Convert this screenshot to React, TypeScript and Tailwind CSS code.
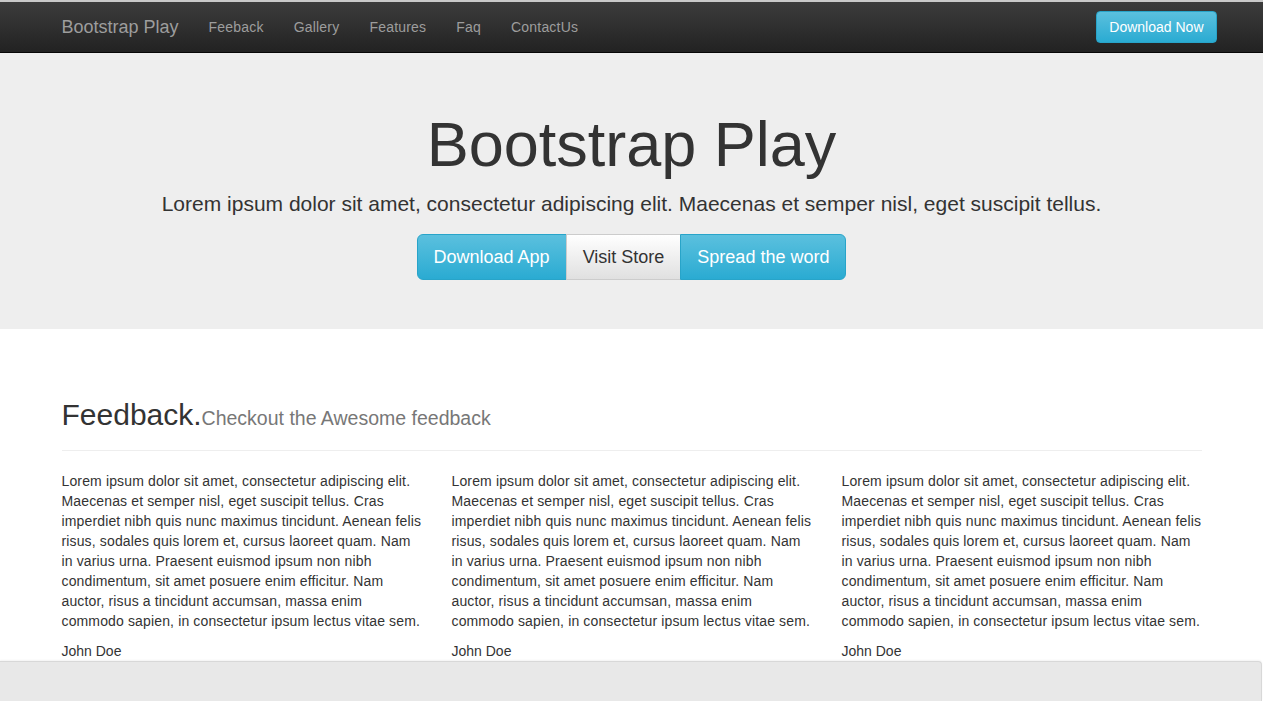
import React from "react";

const lorem =
  "Lorem ipsum dolor sit amet, consectetur adipiscing elit. Maecenas et semper nisl, eget suscipit tellus. Cras imperdiet nibh quis nunc maximus tincidunt. Aenean felis risus, sodales quis lorem et, cursus laoreet quam. Nam in varius urna. Praesent euismod ipsum non nibh condimentum, sit amet posuere enim efficitur. Nam auctor, risus a tincidunt accumsan, massa enim commodo sapien, in consectetur ipsum lectus vitae sem.";

export default function App() {
  const links = ["Feeback", "Gallery", "Features", "Faq", "ContactUs"];
  return (
    <div className="min-h-[701px] bg-white text-[#333] font-['Liberation_Sans',Arial,sans-serif] text-[14px] leading-[20px]">
      {/* Navbar */}
      <div className="border-t-2 border-[#c9c9c9]">
        <nav className="h-[51px] border-b border-[#080808] bg-[linear-gradient(to_bottom,#3c3c3c_0%,#222_100%)]">
          <div className="mx-auto flex h-[50px] w-[1170px] items-center px-[15px]">
            <a className="mr-[15px] text-[18px] leading-[20px] text-[#9d9d9d]">Bootstrap Play</a>
            <ul className="flex items-center">
              {links.map((l) => (
                <li key={l} className="px-[15px] text-[14px] leading-[20px] tracking-[0.2px] text-[#9d9d9d]">
                  {l}
                </li>
              ))}
            </ul>
            <div className="ml-auto -mr-[15px] flex items-center">
              <button className="h-[32px] rounded-[4px] border border-[#28a4c9] bg-[linear-gradient(to_bottom,#5bc0de_0%,#2aabd2_100%)] px-[12px] text-[14px] leading-[20px] text-white">
                Download Now
              </button>
            </div>
          </div>
        </nav>
      </div>

      {/* Jumbotron */}
      <section className="bg-[#eeeeee] pt-[57px] pb-[49px] text-center">
        <h1 className="text-[63px] leading-[69px] text-[#333] mb-[10px]">Bootstrap Play</h1>
        <p className="text-[21px] leading-[29.4px] text-[#333] mb-[16px]">
          Lorem ipsum dolor sit amet, consectetur adipiscing elit. Maecenas et semper nisl, eget suscipit tellus.
        </p>
        <div className="inline-flex">
          <button className="h-[46px] rounded-l-[6px] border border-[#28a4c9] bg-[linear-gradient(to_bottom,#5bc0de_0%,#2aabd2_100%)] px-[16px] text-[18px] leading-[24px] text-white">
            Download App
          </button>
          <button className="-ml-px h-[46px] border border-[#ccc] bg-[linear-gradient(to_bottom,#fff_0%,#e0e0e0_100%)] px-[16px] text-[18px] leading-[24px] text-[#333]">
            Visit Store
          </button>
          <button className="-ml-px h-[46px] rounded-r-[6px] border border-[#28a4c9] bg-[linear-gradient(to_bottom,#5bc0de_0%,#2aabd2_100%)] px-[16px] text-[18px] leading-[24px] text-white">
            Spread the word
          </button>
        </div>
      </section>

      {/* Feedback */}
      <section className="mx-auto w-[1170px] px-[15px] pt-[69px]">
        <div className="border-b border-[#eee] pb-[15px] mb-[20px]">
          <h2 className="text-[30px] leading-[33px] text-[#333]">
            Feedback.<small className="text-[19.5px] text-[#777]">Checkout the Awesome feedback</small>
          </h2>
        </div>
        <div className="-mx-[15px] grid grid-cols-3">
          {[0, 1, 2].map((i) => (
            <div key={i} className="px-[15px]">
              <p className="mb-[10px] w-[360px] tracking-[0.14px]">{lorem}</p>
              <p>John Doe</p>
            </div>
          ))}
        </div>
      </section>

      {/* Bottom panel */}
      <div className="mr-[1px] h-[40px] rounded-tr-[4px] border-t border-r border-[#d8d8d8] bg-[#e8e8e8] shadow-[0_-1px_2px_rgba(0,0,0,0.05)]"></div>
    </div>
  );
}
